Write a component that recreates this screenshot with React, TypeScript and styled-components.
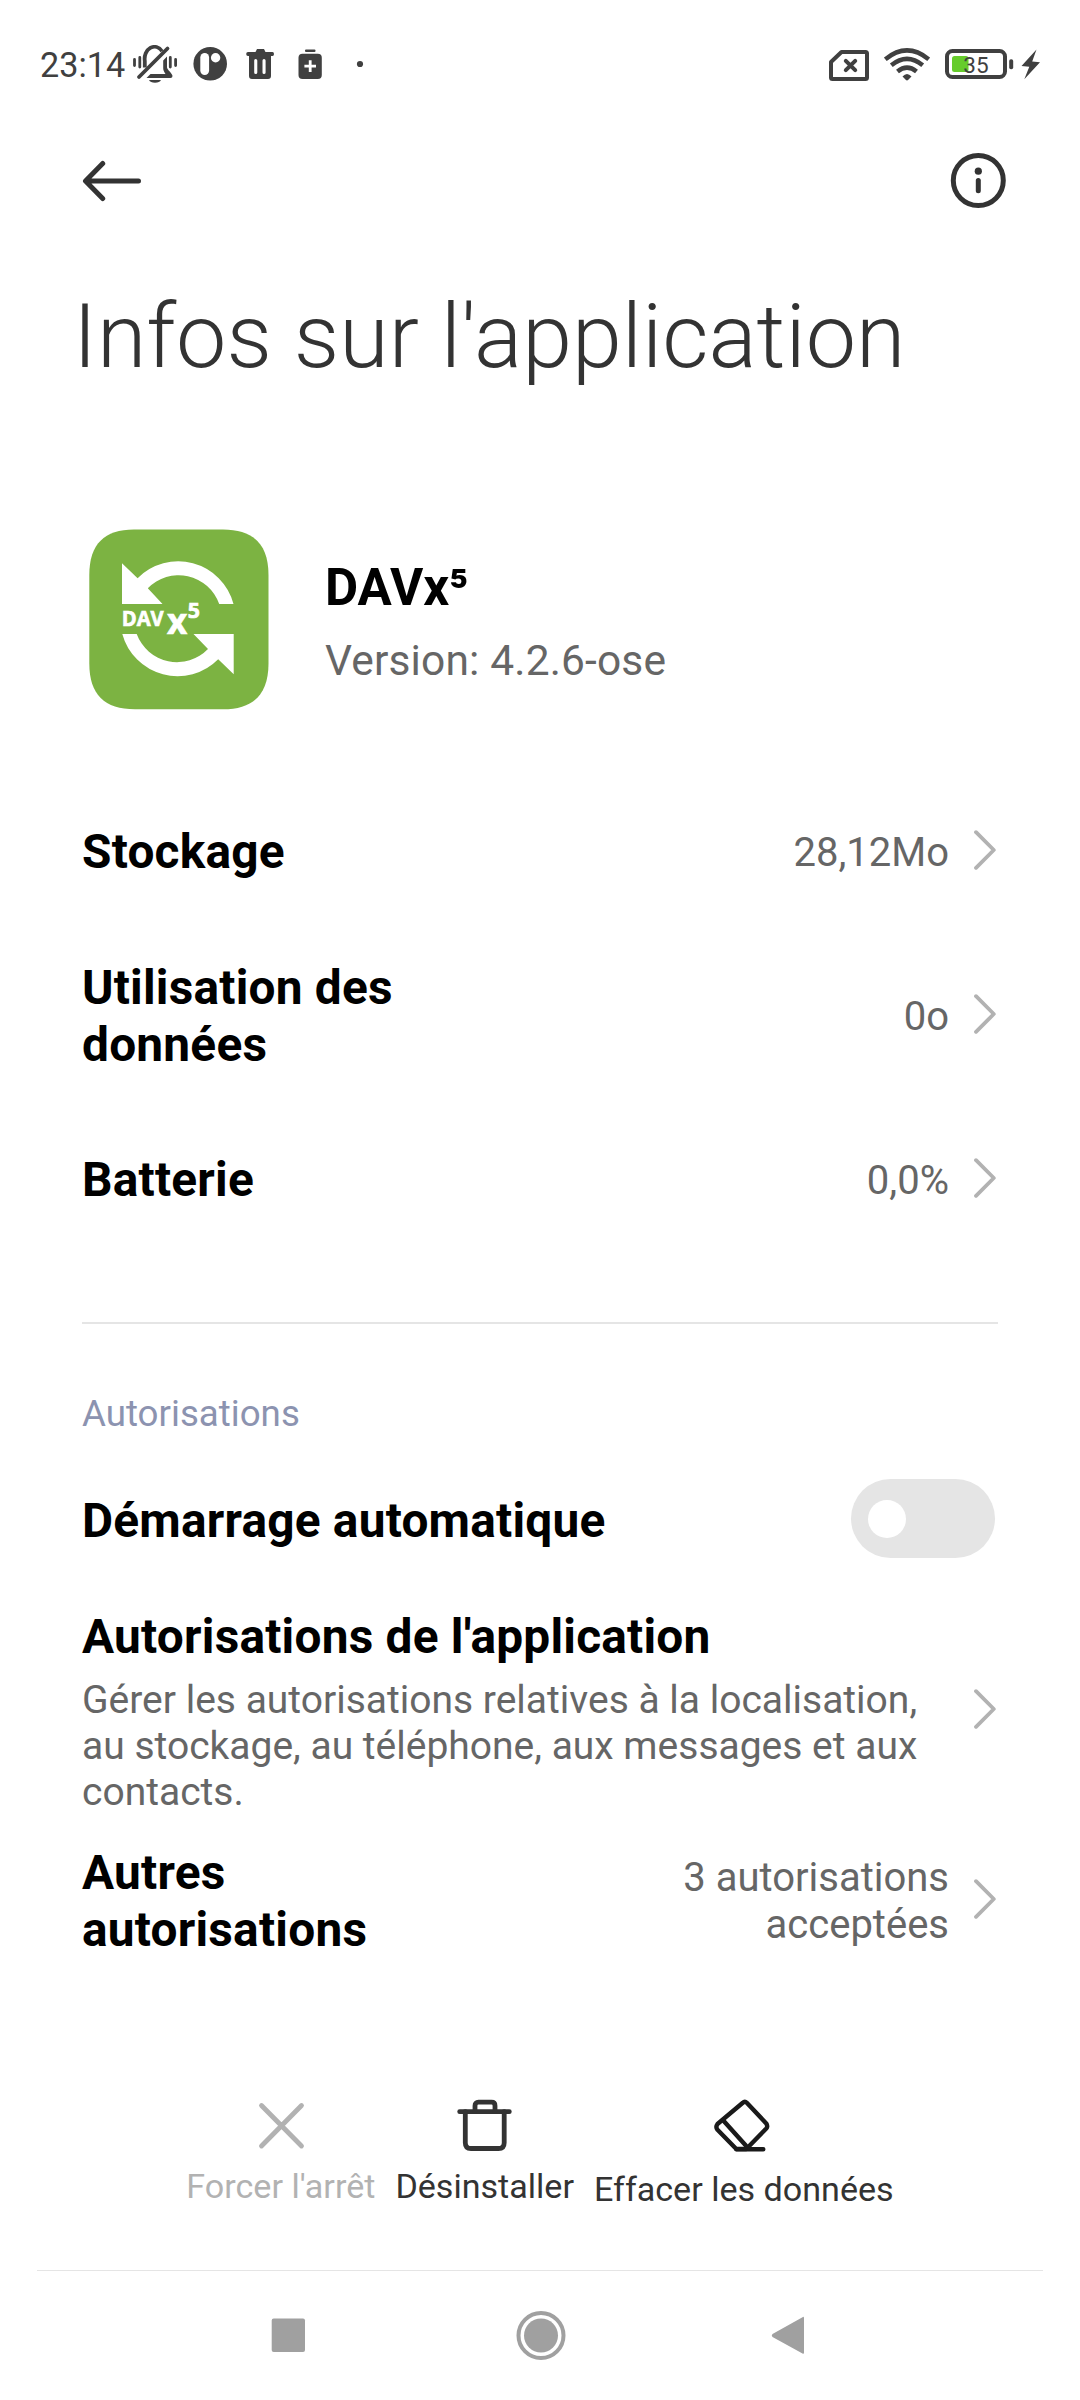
import React from "react";
import styled, { createGlobalStyle } from "styled-components";

const GlobalStyle = createGlobalStyle`
  *, *::before, *::after { box-sizing: border-box; }
  body { margin: 0; background: #fff; font-family: Roboto, "Noto Sans", sans-serif; }
  svg { display: block; flex: none; }
`;

const Screen = styled.div`
  width: 1080px;
  height: 2400px;
  display: flex;
  flex-direction: column;
  background: #fff;
  overflow: hidden;
  & > * {
    flex-shrink: 0;
  }
`;

const StatusBar = styled.header`
  height: 130px;
  display: flex;
  align-items: center;
  justify-content: space-between;
  padding: 0 39px 0 40px;
`;

const StatusGroup = styled.div`
  display: flex;
  align-items: center;
`;

const IconGap = styled.span<{ $w: number }>`
  width: ${(p) => p.$w}px;
  flex: none;
`;

const Clock = styled.span`
  width: 92px;
  font-size: 34.2px;
  line-height: 40px;
  color: #404040;
  white-space: nowrap;
`;

const Toolbar = styled.nav`
  height: 101px;
  display: flex;
  align-items: center;
  justify-content: space-between;
  padding: 0 73px 0 82px;
`;

const IconButton = styled.button`
  border: 0;
  padding: 0;
  background: none;
`;

const Title = styled.h1`
  margin: 53px 0 0 73px;
  font-size: 89.8px;
  line-height: 106px;
  font-weight: 300;
  color: #333;
  white-space: nowrap;
`;

const AppSummary = styled.section`
  display: flex;
  align-items: flex-start;
  gap: 56px;
  margin: 139px 0 0 89px;
  height: 241px;
`;

const AppText = styled.div`
  padding-top: 29px;
`;

const AppName = styled.div`
  font-size: 51px;
  line-height: 60px;
  font-weight: 700;
  color: #000;
`;

const AppVersion = styled.div`
  margin-top: 15px;
  font-size: 42.5px;
  letter-spacing: 0.15px;
  line-height: 56px;
  color: #666;
`;

const Rows = styled.section`
  padding: 0 82px;
`;

const Row = styled.div<{ $height: number }>`
  height: ${(p) => p.$height}px;
  display: flex;
  align-items: center;
`;

const Label = styled.div<{ $width?: number }>`
  padding-top: 1px;
  font-size: 47.8px;
  letter-spacing: 0.22px;
  line-height: 57px;
  font-weight: 700;
  color: #000;
  width: ${(p) => (p.$width ? `${p.$width}px` : "auto")};
`;

const Value = styled.div`
  margin-left: auto;
  max-width: 300px;
  font-size: 40px;
  line-height: 47px;
  color: #666;
  text-align: right;
`;

const ChevronBox = styled.span`
  margin: 0 0 5px 23px;
  padding-right: 2px;
`;

const Details = styled.div`
  flex: 1;
`;

const Description = styled.p`
  margin: 11px 0 0;
  width: 850px;
  font-size: 39px;
  line-height: 46px;
  color: #666;
`;

const Divider = styled.hr`
  margin: 60px 82px 0;
  border: 0;
  height: 2px;
  background: #e5e5e5;
`;

const SectionTitle = styled.h2`
  margin: 66px 0 27px 82px;
  font-size: 36.7px;
  line-height: 48px;
  font-weight: 400;
  color: #8c93b0;
`;

const Switch = styled.button`
  margin: 0 3px 5px auto;
  width: 144px;
  height: 79px;
  padding: 0 17px;
  border: 0;
  border-radius: 40px;
  display: flex;
  align-items: center;
  background: #e5e5e5;
`;

const Knob = styled.span`
  width: 38px;
  height: 38px;
  border-radius: 50%;
  background: #fff;
`;

const Actions = styled.section`
  display: flex;
  justify-content: center;
  gap: 20px;
  margin-top: 138px;
  height: 175px;
`;

const Action = styled.button<{ $color: string; $gap: number }>`
  border: 0;
  padding: 0;
  background: none;
  display: flex;
  flex-direction: column;
  align-items: center;
  gap: ${(p) => p.$gap}px;
  color: ${(p) => p.$color};
  font-family: inherit;
  font-size: 34.1px;
  line-height: 42px;
  white-space: nowrap;
`;

const SystemNav = styled.footer`
  margin: 0 37px;
  height: 130px;
  border-top: 1px solid #e5e5e5;
  display: flex;
  justify-content: space-between;
  align-items: center;
  padding: 0 238px 0 234px;
`;

const HomeButton = styled.span`
  margin-left: 4px;
`;

const Chevron = () => (
  <ChevronBox>
    <svg width="24" height="40" viewBox="0 0 24 40" fill="none" stroke="#b2b2b2" strokeWidth="3.8" strokeLinecap="round" strokeLinejoin="round">
      <path d="M4 2.2 L21.8 20 L4 37.8" />
    </svg>
  </ChevronBox>
);

const MutedBell = () => (
  <svg width="46" height="40" viewBox="132 45 46 40" fill="none" stroke="#404040" strokeLinecap="round">
    <path d="M144.8 67.5 V61 A9.8 12 0 0 1 162 51.2" strokeWidth="3.8" strokeLinecap="butt" />
    <path d="M139 77 L167.5 48.5" strokeWidth="3.8" />
    <path d="M163.2 60.5 L167 56.5 V67.5 C167 69.5 172.5 73.5 172.5 76 Q172.5 78 170.5 78 H146.5 L150.5 74 H165.5 C163.8 71.5 163.2 70 163.2 68 Z" fill="#404040" stroke="none" />
    <path d="M149 80 H161 A6.3 4 0 0 1 149 80 Z" fill="#404040" stroke="none" />
    <path d="M134.5 59.5 V65.5 M139.8 57.5 V67 M170.3 57.5 V67 M175.6 59.5 V65.5" strokeWidth="2.8" />
  </svg>
);

const RoundBadge = () => (
  <svg width="34" height="40" viewBox="193 45 34 40">
    <circle cx="210.2" cy="63.8" r="16.8" fill="#404040" />
    <rect x="200.3" y="53" width="8.8" height="22" rx="4.4" fill="#fff" />
    <circle cx="215.6" cy="57.8" r="4.7" fill="#fff" />
  </svg>
);

const SmallTrash = () => (
  <svg width="28" height="40" viewBox="246 45 28 40" fill="#404040">
    <path d="M257 49 H264 L265.5 52 H272.5 Q274 52 274 54 Q274 56 272.5 56 H248 Q246.2 56 246.2 54 Q246.2 52 248 52 H255.5 Z" />
    <path fillRule="evenodd" d="M249 56 H271 V76 Q271 79 268 79 H252 Q249 79 249 76 Z M255.5 59 Q254.2 59 254.2 60.5 V72.5 Q254.2 74 255.7 74 Q257.3 74 257.3 72.5 V60.5 Q257.3 59 255.5 59 Z M264 59 Q262.5 59 262.5 60.5 V72.5 Q262.5 74 264 74 Q265.6 74 265.6 72.5 V60.5 Q265.6 59 264 59 Z" />
  </svg>
);

const BatteryPlus = () => (
  <svg width="24" height="40" viewBox="298 45 24 40">
    <rect x="305" y="49.5" width="10.5" height="2.6" rx="1" fill="#404040" />
    <rect x="298.5" y="53.8" width="23.3" height="25.2" rx="4" fill="#404040" />
    <path d="M310.2 60.3 V72 M304.4 66.2 H316" stroke="#fff" strokeWidth="2.8" />
  </svg>
);

const MoreDot = () => (
  <svg width="8" height="40" viewBox="356 45 8 40">
    <circle cx="360" cy="64" r="3.1" fill="#404040" />
  </svg>
);

const NoSim = () => (
  <svg width="42" height="40" viewBox="828 45 42 40" fill="none" stroke="#404040" strokeWidth="4" strokeLinejoin="round" strokeLinecap="round">
    <path d="M841.5 52 H865.5 Q867 52 867 53.5 V77.5 Q867 79 865.5 79 H832.5 Q831 79 831 77.5 V62 Z" />
    <path d="M845.8 60.8 L855.2 70.2 M855.2 60.8 L845.8 70.2" />
  </svg>
);

const Wifi = () => (
  <svg width="46" height="40" viewBox="884 45 46 40" fill="none" stroke="#404040" strokeWidth="4.5">
    <path d="M885.3 59.3 Q907 41.5 928.7 59.3" />
    <path d="M891.3 65.2 Q907 52.5 922.7 65.2" />
    <path d="M897.5 71.6 Q907 63.8 916.5 71.6" />
    <path d="M902.5 76.5 Q907 71.5 911.5 76.5 L908.3 79.8 Q907 81 905.7 79.8 Z" fill="#404040" stroke="none" />
  </svg>
);

const Battery = () => (
  <svg width="70" height="40" viewBox="944 45 70 40">
    <rect x="952" y="56" width="16.5" height="16" rx="2.5" fill="#66cc2b" />
    <rect x="947" y="51" width="58" height="26" rx="5.5" fill="none" stroke="#404040" strokeWidth="4" />
    <rect x="1009.2" y="59.3" width="4" height="10" rx="1.8" fill="#404040" />
    <text x="976" y="72.8" textAnchor="middle" fontFamily="Roboto, sans-serif" fontSize="22.5" fill="#404040">35</text>
  </svg>
);

const Bolt = () => (
  <svg width="20" height="40" viewBox="1021 45 20 40">
    <path d="M1036.5 49.5 L1021.5 66 L1029.3 66.8 L1024.3 79.3 L1040 62.2 L1032.2 61.5 Z" fill="#404040" />
  </svg>
);

const AppIcon = () => (
  <svg width="180" height="181" viewBox="0 0 180 181">
    <path
      d="M45 .5 H134 C164 .5 179.5 15 179.5 46 V134.5 C179.5 165.5 164 180.3 134 180.3 H46 C15.5 180.3 .3 165.5 .3 134.5 V46 C.3 15 15.5 .5 45 .5 Z"
      fill="#7cb342"
    />
    <g fill="#fff">
      <path d="M33 34.3 L48.6 49.3 A57.2 57.2 0 0 1 144.5 74.9 H130.2 A43 43 0 0 0 58.8 59.3 L73.5 74.9 H33 Z" />
      <path d="M144.7 145.3 L129.2 130.2 A57.2 57.2 0 0 1 33.3 105 H47.7 A43 43 0 0 0 119 120 L104.5 105 H144.7 Z" />
    </g>
    <g fill="#fff" stroke="#fff" strokeWidth="0.7" fontFamily="'Open Sans', sans-serif" fontWeight="700">
      <text x="32.7" y="97.3" fontSize="22" textLength="42" lengthAdjust="spacingAndGlyphs">DAV</text>
      <text x="77.9" y="105" fontSize="35">x</text>
      <text x="98.7" y="89" fontSize="21.3">5</text>
    </g>
  </svg>
);

const links = [
  { label: "Stockage", value: "28,12Mo" },
  { label: "Utilisation des données", value: "0o" },
  { label: "Batterie", value: "0,0%" },
];

export default function App() {
  return (
    <>
      <GlobalStyle />
      <Screen>
        <StatusBar>
          <StatusGroup>
            <Clock>23:14</Clock>
            <MutedBell />
            <IconGap $w={15} />
            <RoundBadge />
            <IconGap $w={19} />
            <SmallTrash />
            <IconGap $w={24} />
            <BatteryPlus />
            <IconGap $w={34} />
            <MoreDot />
          </StatusGroup>
          <StatusGroup>
            <NoSim />
            <IconGap $w={14} />
            <Wifi />
            <IconGap $w={14} />
            <Battery />
            <IconGap $w={7} />
            <Bolt />
          </StatusGroup>
        </StatusBar>

        <Toolbar>
          <IconButton aria-label="Retour">
            <svg width="60" height="44" viewBox="0 0 60 44" fill="none" stroke="#333" strokeWidth="5" strokeLinecap="round" strokeLinejoin="round">
              <path d="M56.5 22 H4.5 M20.7 4.5 L3.5 22 L20.7 39.5" />
            </svg>
          </IconButton>
          <IconButton aria-label="Informations">
            <svg width="57" height="57" viewBox="0 0 57 57">
              <circle cx="28.3" cy="28.5" r="25" fill="none" stroke="#333" strokeWidth="5" />
              <circle cx="28.3" cy="19.2" r="3.6" fill="#333" />
              <rect x="25.8" y="26" width="5" height="15.2" rx="2.5" fill="#333" />
            </svg>
          </IconButton>
        </Toolbar>

        <Title>Infos sur l'application</Title>

        <AppSummary>
          <AppIcon />
          <AppText>
            <AppName>DAVx⁵</AppName>
            <AppVersion>Version: 4.2.6-ose</AppVersion>
          </AppText>
        </AppSummary>

        <Rows>
          {links.map((l) => (
            <Row key={l.label} $height={164}>
              <Label $width={400}>{l.label}</Label>
              <Value>{l.value}</Value>
              <Chevron />
            </Row>
          ))}
        </Rows>

        <Divider />
        <SectionTitle>Autorisations</SectionTitle>

        <Rows>
          <Row $height={112}>
            <Label>Démarrage automatique</Label>
            <Switch role="switch" aria-checked={false}>
              <Knob />
            </Switch>
          </Row>
          <Row $height={268}>
            <Details>
              <Label>Autorisations de l'application</Label>
              <Description>
                Gérer les autorisations relatives à la localisation, au stockage, au téléphone, aux messages et aux contacts.
              </Description>
            </Details>
            <Chevron />
          </Row>
          <Row $height={112}>
            <Label $width={400}>Autres autorisations</Label>
            <Value>3 autorisations acceptées</Value>
            <Chevron />
          </Row>
        </Rows>

        <Actions>
          <Action $color="#b2b2b2" $gap={10}>
            <svg width="60" height="60" viewBox="0 0 60 60" fill="none" stroke="currentColor" strokeWidth="4.8" strokeLinecap="round">
              <path d="M10.5 10.5 L50.5 51 M50.5 10.5 L10.5 51" />
            </svg>
            Forcer l'arrêt
          </Action>
          <Action $color="#333" $gap={10}>
            <svg width="60" height="60" viewBox="0 0 60 60" fill="none" stroke="currentColor" strokeWidth="4.8" strokeLinecap="round" strokeLinejoin="round">
              <path d="M4.7 16.7 H54.3" />
              <path d="M10.3 16.7 V47.7 Q10.3 53.5 16 53.5 H43.5 Q49.2 53.5 49.2 47.7 V16.7" />
              <path d="M20 16 V10.7 Q20 7.2 23.5 7.2 H36.5 Q40 7.2 40 10.7 V16" />
            </svg>
            Désinstaller
          </Action>
          <Action $color="#333" $gap={13}>
            <svg width="60" height="60" viewBox="2.2 0 60 60" fill="none" stroke="#1a1a1a" strokeWidth="4.4" strokeLinecap="round" strokeLinejoin="round">
              <path d="M31 7.8 Q33 5.8 35 7.8 L54.5 28.5 Q56.3 31.5 54.5 33.5 L34.5 54 H24.5 L5.7 34.8 Q3.5 32 5.7 29 Z" />
              <path d="M11.5 25.5 L34 50.5 M24.5 54.3 H51.5" />
            </svg>
            Effacer les données
          </Action>
        </Actions>

        <SystemNav>
          <svg width="35" height="51" viewBox="0 0 35 51">
            <rect x=".7" y="8.5" width="33.3" height="33.5" rx="2" fill="#a0a0a0" />
          </svg>
          <HomeButton>
            <svg width="52" height="51" viewBox="0 0 52 51">
              <circle cx="26" cy="25.5" r="22.5" fill="none" stroke="#a0a0a0" strokeWidth="4" />
              <circle cx="26" cy="25.5" r="17" fill="#a0a0a0" />
            </svg>
          </HomeButton>
          <svg width="34" height="51" viewBox="0 0 34 51">
            <path d="M31.5 7.2 Q33 6.2 33 8.2 V42.5 Q33 44.5 31.5 43.5 L1.5 27 Q0 25.5 1.5 24 Z" fill="#a0a0a0" />
          </svg>
        </SystemNav>
      </Screen>
    </>
  );
}
